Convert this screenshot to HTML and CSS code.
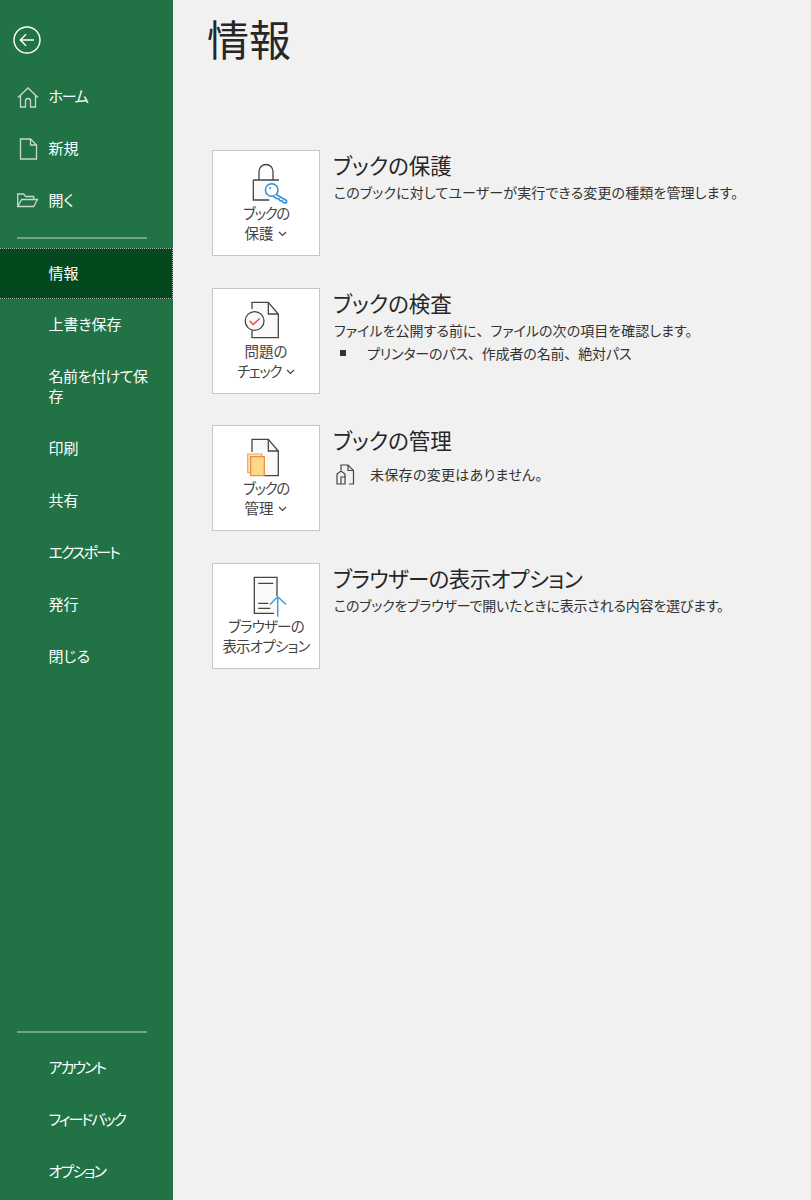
FILE: index.html
```html
<!DOCTYPE html>
<html lang="ja">
<head>
<meta charset="utf-8">
<title>情報</title>
<link rel="stylesheet" href="styles.css">
</head>
<body>
<div class="app">
  <nav class="side">
    <div class="back">
      <svg width="30" height="30" viewBox="0 0 30 30" fill="none" stroke="#fff" stroke-width="1.4"><circle cx="14" cy="14" r="13"/><path d="M21 14H7.5M13 8.3 7.3 14l5.7 5.7"/></svg>
    </div>
    <a class="item kana-s"><svg class="ic" width="22" height="22" viewBox="0 0 22 22" fill="none" stroke="#c8d8ce" stroke-width="1.3"><path d="M1 11.500 11 2l10 9.500M3.500 9.500V21h5v-6a2.500 2.500 0 0 1 5 0v6h5V9.500"/></svg>ホーム</a>
    <a class="item"><svg class="ic" width="22" height="22" viewBox="0 0 22 22" fill="none" stroke="#c8d8ce" stroke-width="1.3"><path d="M3.500 1h10l6 6v14h-16zM13.500 1v6h6"/></svg>新規</a>
    <a class="item"><svg class="ic" width="22" height="22" viewBox="0 0 22 22" fill="none" stroke="#c8d8ce" stroke-width="1.3"><path d="M.700 16.500V4h6l2 2.500h8V9.500M.700 16.500h16l3.800-7H4.700z"/></svg>開く</a>
    <div class="rule top"></div>
    <a class="item active">情報</a>
    <a class="item">上書き保存</a>
    <a class="item tall">名前を付けて保存</a>
    <a class="item">印刷</a>
    <a class="item">共有</a>
    <a class="item kana">エクスポート</a>
    <a class="item">発行</a>
    <a class="item">閉じる</a>
    <div class="spring"></div>
    <div class="rule bottom"></div>
    <a class="item kana">アカウント</a>
    <a class="item kana">フィードバック</a>
    <a class="item kana">オプション</a>
  </nav>
  <main class="main">
    <h1 class="title">情報</h1>
    <section class="card">
      <button class="tile">
        <svg class="tile-ic" width="46" height="44" viewBox="0 0 46 44" fill="none"><path d="M15 17V8.500a7 7 0 0 1 14 0V17" stroke="#444" stroke-width="1.300"/><path d="M9.300 17H35v20H9.300z" fill="#fafafa"/><path d="M9.300 17H35M9.300 17v20h16" stroke="#444" stroke-width="1.300"/><circle cx="27.700" cy="27" r="6.300" fill="#fff" stroke="#2e8fd6" stroke-width="1.500"/><path d="M32 31.500l10.500 6v2.200h-3l-1.500-2h-2l-1-2h-2l-3.500-2.200" fill="#fff" stroke="#2e8fd6" stroke-width="1.500"/><circle cx="26" cy="25" r="1" fill="#2e8fd6"/></svg>
        <span class="tile-label"><span class="kana">ブックの</span><br>保護<svg class="chev" width="9" height="6" viewBox="0 0 9 6" fill="none" stroke="#444" stroke-width="1.200"><path d="M1 1l3.500 3.500L8 1"/></svg></span>
      </button>
      <div class="info">
        <h2>ブックの保護</h2>
        <p class="sp-a">このブックに対してユーザーが実行できる変更の種類を管理します。</p>
      </div>
    </section>
    <section class="card">
      <button class="tile">
        <svg class="tile-ic" width="46" height="44" viewBox="0 0 46 44" fill="none"><path d="M8 8V1.300h16.300L34.300 13v23.700H8V29" stroke="#444" stroke-width="1.300" fill="#fafafa"/><path d="M24.300 1.300V13h10" stroke="#444" stroke-width="1.300"/><circle cx="10.600" cy="20" r="9.400" fill="#fafafa" stroke="#444" stroke-width="1.300"/><path d="M5.800 20l3.500 3.500 6.500-6" stroke="#e8474c" stroke-width="1.500"/></svg>
        <span class="tile-label">問題の<br><span class="kana">チェック</span><svg class="chev" width="9" height="6" viewBox="0 0 9 6" fill="none" stroke="#444" stroke-width="1.200"><path d="M1 1l3.500 3.500L8 1"/></svg></span>
      </button>
      <div class="info">
        <h2>ブックの検査</h2>
        <p class="sp-b">ファイルを公開する前に<span class="pn">、</span>ファイルの次の項目を確認します。</p>
        <p class="bullet"><i class="sq"></i><span>プリンターのパス<span class="pn">、</span>作成者の名前<span class="pn">、</span>絶対パス</span></p>
      </div>
    </section>
    <section class="card">
      <button class="tile">
        <svg class="tile-ic" width="46" height="44" viewBox="0 0 46 44" fill="none"><path d="M8 14V1.300h16.300L34.300 13v24.700H20" stroke="#444" stroke-width="1.300" fill="#fafafa"/><path d="M24.300 1.300V13h10" stroke="#444" stroke-width="1.300"/><path d="M3.700 34.700V16h14v18.700z" fill="#fde2bd" stroke="#f0a366" stroke-width="1.200"/><path d="M6.700 37.700V18.700h13.600v19z" fill="#fad98b" stroke="#ed8f3a" stroke-width="1.300"/></svg>
        <span class="tile-label"><span class="kana">ブックの</span><br>管理<svg class="chev" width="9" height="6" viewBox="0 0 9 6" fill="none" stroke="#444" stroke-width="1.200"><path d="M1 1l3.500 3.500L8 1"/></svg></span>
      </button>
      <div class="info">
        <h2>ブックの管理</h2>
        <p class="status"><svg class="status-ic" width="19" height="21" viewBox="0 0 19 21" fill="none" stroke="#444" stroke-width="1.200"><path d="M5 6V1h7l5.500 5.500V20H13M12 1v5.500h5.500"/><path d="M1 20V10l4-3 4 3v10zM5 20v-7h5"/></svg>未保存の変更はありません。</p>
      </div>
    </section>
    <section class="card">
      <button class="tile">
        <svg class="tile-ic" width="46" height="44" viewBox="0 0 46 44" fill="none"><path d="M30 37.300H10.300V1.300H33V20" stroke="#444" stroke-width="1.300" fill="#fafafa"/><path d="M14.300 7.300h15M14.300 27.300h10M14.300 32.300h12" stroke="#444" stroke-width="1.300"/><path d="M33.700 40.700V21M26 28.500l7.700-7.700 8.300 7.700" stroke="#3d9ee0" stroke-width="1.500"/></svg>
        <span class="tile-label"><span class="tight">ブラウザーの</span><br><span class="tight">表示オプション</span></span>
      </button>
      <div class="info">
        <h2 class="narrow">ブラウザーの表示オプション</h2>
        <p class="sp-c">このブックをブラウザーで開いたときに表示される内容を選びます。</p>
      </div>
    </section>
  </main>
</div>
</body>
</html>
```
FILE: styles.css
```css
* { box-sizing: border-box; }
html, body { margin: 0; height: 100%; }
body {
  font-family: "Noto Sans CJK JP", "Noto Sans", sans-serif;
  font-weight: 400;
  font-feature-settings: "palt";
  background: #f1f1f1;
  color: #333;
}
.app { display: flex; height: 1200px; overflow: hidden; }
.side {
  width: 173px;
  flex: none;
  background: #217346;
  color: #fff;
  display: flex;
  flex-direction: column;
  padding: 26px 0 2px;
}
.back { height: 45px; padding-left: 13px; flex: none; }
.item {
  position: relative;
  flex: none;
  height: 52px;
  display: flex;
  align-items: center;
  padding: 0 20px 3px 48.500px;
  font-size: 15px;
  line-height: 20px;
}
.item.tall { letter-spacing: -.45px; }
.item.kana { letter-spacing: -1.900px; }
.item.kana-s { letter-spacing: -1.300px; }
.ic { position: absolute; left: 17px; top: 15px; }
.tall { height: 72px; }
.item.active {
  height: 51px;
  padding-bottom: 1px;
  background: #03491d;
  border-top: 1px dotted #a9b9ad;
  border-bottom: 1px dotted #a9b9ad;
  border-right: 1px dotted #a9b9ad;
}
.rule { height: 2px; background: #6fa583; margin-left: 17px; width: 130px; flex: none; }
.top { margin-top: 10px; margin-bottom: 9px; }
.bottom { margin-bottom: 9px; }
.spring { flex: 1; }
.main { flex: 1; padding-left: 39px; }
.title {
  margin: 0 0 85px -5px;
  padding-top: 11px;
  font-size: 42px;
  line-height: 54px;
  font-weight: 400;
  color: #262626;
}
.card { display: flex; height: 137.500px; }
.tile {
  width: 108px;
  height: 106px;
  flex: none;
  background: #fff;
  border: 1px solid #c6c6c6;
  padding: 12px 0 0;
  display: flex;
  flex-direction: column;
  align-items: center;
  font-family: inherit;
  font-feature-settings: inherit;
  color: #444;
}
.tile-ic { flex: none; margin-left: 2px; }
.tile-label { font-size: 14.500px; line-height: 20px; text-align: center; margin-top: -4px; white-space: nowrap; }
.tile-label .kana { letter-spacing: -1.400px; }
.tight { letter-spacing: -.8px; }
.chev { margin-left: 5px; vertical-align: 2px; }
.info { margin-left: 13px; }
h2 { margin: 0 0 1px; font-size: 21.500px; line-height: 30px; font-weight: 400; color: #262626; }
h2.narrow { letter-spacing: -.6px; }
.info p { margin: 0 0 0 1px; font-size: 14px; line-height: 23px; color: #333; white-space: nowrap; }
.info .sp-a { letter-spacing: .13px; }
.info .sp-b { letter-spacing: .03px; }
.info .sp-c { letter-spacing: -.2px; }
.pn { font-feature-settings: normal; }
.info .bullet { display: flex; align-items: center; letter-spacing: -.15px; }
.sq { width: 6px; height: 6px; background: #333; margin: 0 21px 0 6px; flex: none; }
.info .status { display: flex; align-items: center; margin-top: 8px; letter-spacing: .3px; margin-left: 0; }
.status-ic { margin: 0 15px 0 3px; flex: none; }
```
